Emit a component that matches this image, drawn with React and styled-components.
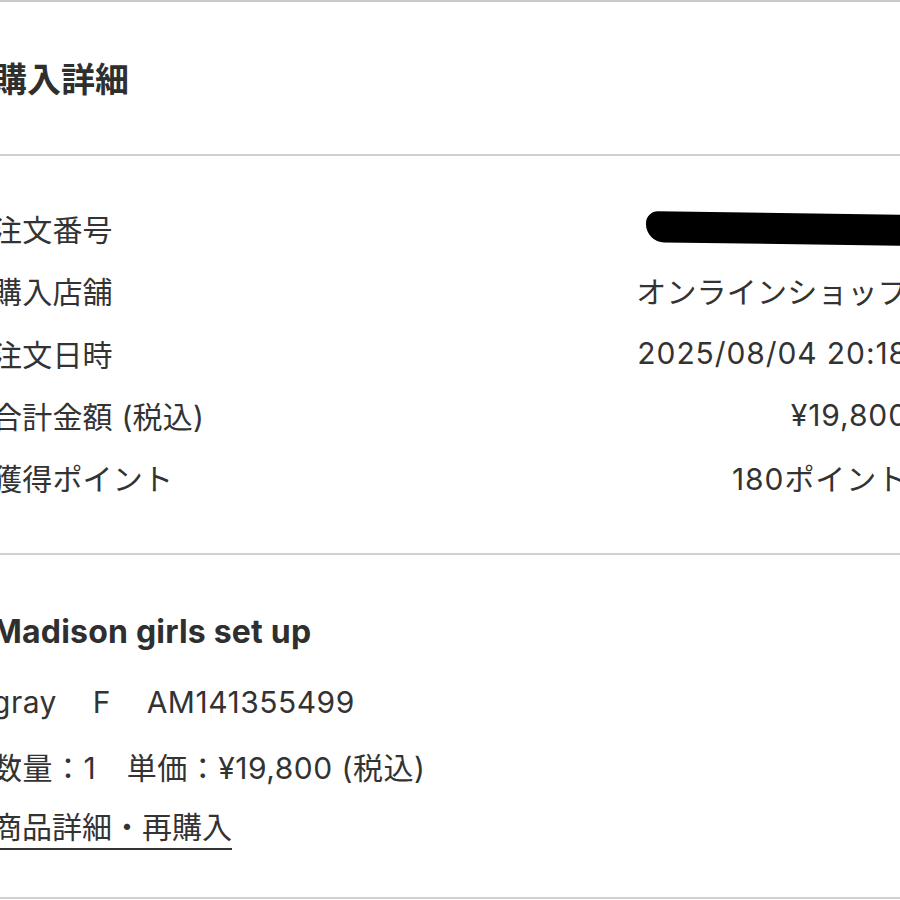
import styled, { createGlobalStyle } from 'styled-components';

const GlobalStyle = createGlobalStyle`
    html, body {
        margin: 0;
        padding: 0;
        background: #fff;
        overflow: hidden;
    }
    body {
        font-family: "Inter", "Noto Sans CJK JP", sans-serif;
        color: #333;
    }
`

const info = [
    { label: '注文番号', value: null },
    { label: '購入店舗', value: 'オンラインショップ', wide: false },
    { label: '注文日時', value: '2025/08/04 20:18', wide: true },
    { label: '合計金額 (税込)', value: '¥19,800', wide: true },
    { label: '獲得ポイント', value: '180ポイント', wide: true },
]

// the screenshot is cropped, so the content runs a little past both edges
const Page = styled.div`
    width: 916px;
    margin: 0 -8px;
    border-top: 2px solid #c9c9c9;
`

const Section = styled.section`
    height: ${(p) => p.height}px;
    padding: ${(p) => p.pad};
    box-sizing: border-box;
    border-bottom: 2px solid #d0d0d0;
    display: flex;
    flex-direction: column;
    justify-content: ${(p) => p.justify || 'flex-start'};
`

const Title = styled.h1`
    margin: 0 0 0 1px;
    font-size: 34px;
    font-weight: 700;
    color: #2f2f2f;
`

const Row = styled.div`
    height: 62.3px;
    display: flex;
    align-items: center;
    justify-content: space-between;
    font-size: 30px;
    letter-spacing: 0.2px;
`

const Label = styled.span`
    color: #333;
`

const Value = styled.span`
    color: #333;
    letter-spacing: ${(p) => (p.wide ? '0.9px' : '0.2px')};
`

const Redacted = styled.span`
    display: block;
    width: 262px;
    height: 31px;
    margin-top: 1px;
    background: #000;
    border-radius: 12px 2px 4px 18px;
    transform: skewY(0.8deg);
`

const ProductName = styled.div`
    font-size: 32px;
    font-weight: 700;
    color: #2f2f2f;
    height: 40px;
    line-height: 40px;
    margin-bottom: 30px;
    letter-spacing: 0.2px;
`

const Line = styled.div`
    font-size: 30px;
    height: 40px;
    line-height: 40px;
    margin-bottom: ${(p) => p.gap}px;
    white-space: pre;
    letter-spacing: 0.5px;
`

const DetailLink = styled.a`
    align-self: flex-start;
    font-size: 30px;
    line-height: 38px;
    color: #333;
    text-decoration: none;
    border-bottom: 2px solid #333;
    padding-bottom: 2px;
`

const App = () => (
    <>
        <GlobalStyle />
        <Page>
            <Section height={154} pad="0 0 2px" justify="center">
                <Title>購入詳細</Title>
            </Section>
            <Section height={399} pad="41px 0 0">
                {info.map(({ label, value, wide }) => (
                    <Row key={label}>
                        <Label>{label}</Label>
                        {value ? <Value wide={wide}>{value}</Value> : <Redacted />}
                    </Row>
                ))}
            </Section>
            <Section height={344} pad="57px 0 0">
                <ProductName>Madison girls set up</ProductName>
                <Line gap={26}>{'gray    F    AM141355499'}</Line>
                <Line gap={20}>{'数量：1　単価：¥19,800 (税込)'}</Line>
                <DetailLink href="#">商品詳細・再購入</DetailLink>
            </Section>
        </Page>
    </>
)

export default App;
